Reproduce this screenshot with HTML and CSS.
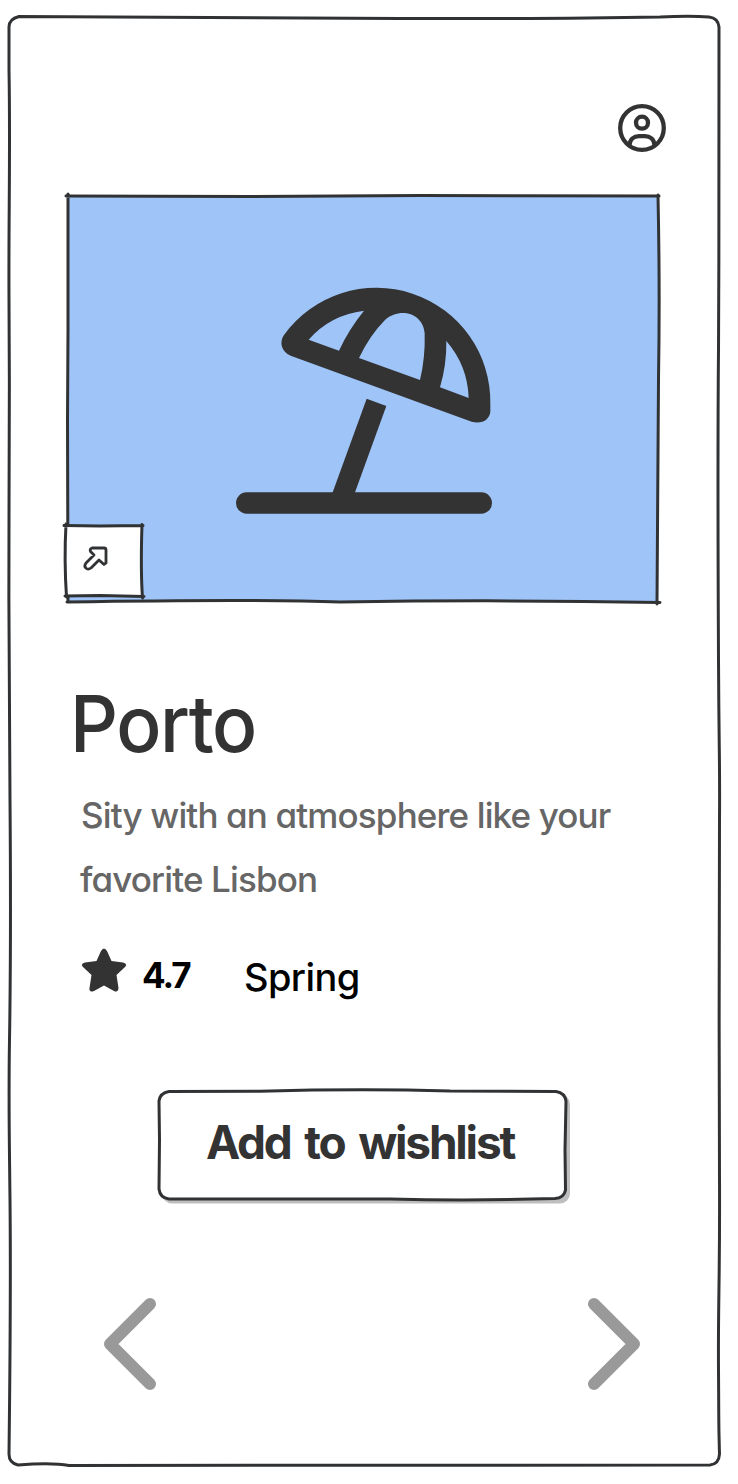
FILE: index.html
```html
<!DOCTYPE html>
<html lang="en">
<head>
<meta charset="utf-8">
<title>Porto</title>
<link rel="stylesheet" href="styles.css">
</head>
<body>
<main class="card">
  <svg class="outline" viewBox="0 0 738 1484" aria-hidden="true">
    <path d="M19 16.500Q250 18 400 18.500T660 17Q690 15.500 709 17Q718 18 719 27C718 120 719.500 240 718.500 350S718 560 718.500 660S720 760 719.500 820S719 1080 719.500 1180S718 1300 718.500 1370S718.500 1420 719.500 1454Q719 1464 710 1465L69 1465.500Q52 1462.500 18 1465Q9 1463 9 1454C10 1370 11 1290 10 1200S8.500 1100 9.500 1040S10.500 860 10 800S8.500 620 9 520S9.500 380 9 300S10.500 150 9 70V27Q9 19 19 16.500Z"/>
  </svg>
  <header class="topbar">
    <svg class="profile" viewBox="618 104 48 48" role="img" aria-label="Profile">
      <circle cx="642" cy="128" r="21.800"/><circle cx="642" cy="122.700" r="6"/>
      <path d="M629.500 145C630 139 634 136.200 639 136.200H645C650 136.200 654 139 654.500 145"/>
    </svg>
  </header>
  <section class="hero">
    <svg class="hero-art" viewBox="64 191 600 416" role="img" aria-label="Beach umbrella">
      <path class="sky" d="M68 196L420 195L658 196L659 350L657 602Q500 599 340 602Q200 599 68 602Z"/>
      <path class="line" d="M66 196L250 196.500L420 195.500L659 196M658 195Q660 290 658.500 380L657 604M660 602.500Q500 599.500 340 602Q260 599 67 602M68 194V330L67.500 420L68 602"/>
      <g class="umbrella" transform="translate(220 270) scale(.33333)">
        <path fill-rule="evenodd" d="M192 195A342 342 0 0 1 811 402V425C808 450 785 463 755 455L212 257C184 245 177 217 192 195ZM266 209L357 242Q385 180 432 122Q330 135 266 209ZM417 264L600 330Q616 265 614 190C610 130 540 110 495 150Q450 195 417 264ZM679 213Q680 285 660 352L746 384Q743 287 679 213Z"/>
        <path d="M440 386L499 408L404 670H337Z"/>
        <rect x="48" y="667" width="768" height="64" rx="32"/>
      </g>
    </svg>
    <svg class="open" viewBox="62 521 84 80" role="img" aria-label="Open">
      <path class="paper" d="M66 526H142V596H66Z"/>
      <path class="line" d="M64 525.500L100 526L143 525.500M142 524.500Q140.500 570 142.500 598M144 596.500L100 595.500L65 596M66 524Q64 560 66.500 597"/>
      <path class="arrow" d="M92 548H104Q106 548 106 550V563L104 564.500L99 560L91 568C87 571 83 567 86 563L94 555L90.500 551.500Q89.500 549 92 548Z"/>
    </svg>
  </section>
  <section class="details">
    <h1 class="title"><span class="fit name">Porto</span></h1>
    <p class="summary"><span class="fit first">Sity with an atmosphere like your</span><br><span class="fit second">favorite Lisbon</span></p>
    <div class="facts">
      <svg class="star" viewBox="81 948 46 45" aria-hidden="true"><path d="M101 951Q104 946 107 951L111.500 961L123 962.500Q128 964 125 967L116.500 975L118.500 988Q118 993 114 991L104 985.500L94 991Q89 993 89.500 988L91.500 975L83 967Q80 964 85 962.500L96.500 961Z"/></svg>
      <span class="rating">4.7</span>
      <span class="season">Spring</span>
    </div>
  </section>
  <button class="wishlist" type="button">
    <svg class="button-frame" viewBox="156 1086 418 120" aria-hidden="true">
      <rect class="shadow" x="162" y="1094" width="408" height="109.500" rx="10"/>
      <path class="paper line" d="M169 1091.500L260 1091.300Q360 1088.500 450 1091L556 1091.500Q565 1093 566 1101L565 1150L565.500 1190Q564 1198 555 1198.500Q470 1201 390 1199L169 1199Q160 1198 159 1189L159.500 1140L159 1101Q160 1093 169 1091.500Z"/>
    </svg>
    <span class="button-label">Add to wishlist</span>
  </button>
  <nav class="pager">
    <svg class="chevron" viewBox="0 0 54 94" role="img" aria-label="Previous"><path d="M47 7L7 47L47 87"/></svg>
    <svg class="chevron" viewBox="0 0 54 94" role="img" aria-label="Next"><path d="M7 7L47 47L7 87"/></svg>
  </nav>
</main>
</body>
</html>
```
FILE: styles.css
```css
* { box-sizing: border-box; }
body { margin: 0; background: #fff; font-family: Inter, "Open Sans", sans-serif; font-feature-settings: "cv11" 1; color: #333; }
svg { display: block; fill: none; }
.card { position: relative; width: 738px; height: 1484px; padding: 104px 72px 0 64px; overflow: hidden; display: flex; flex-direction: column; }
.outline { position: absolute; inset: 0; width: 738px; height: 1484px; stroke: #303234; stroke-width: 3; pointer-events: none; }
.topbar { display: flex; justify-content: flex-end; height: 87px; }
.profile { width: 48px; height: 48px; stroke: #333; stroke-width: 4.3; }
.hero { position: relative; height: 416px; }
.hero-art { width: 600px; height: 416px; }
.sky { fill: #9fc4f8; }
.line { stroke: #303234; stroke-width: 3; stroke-linecap: round; stroke-linejoin: round; }
.umbrella { fill: #333; }
.paper { fill: #fff; }
.open { position: absolute; left: -2px; bottom: 6px; width: 84px; height: 80px; }
.arrow { stroke: #303234; stroke-width: 2.8; stroke-linejoin: round; }
.details { padding-top: 77px; }
.fit { display: inline-block; transform-origin: left center; white-space: nowrap; }
.title { margin: 0; padding-left: 6px; height: 99px; font-size: 78px; font-weight: 550; line-height: 80px; letter-spacing: -1.5px; }
.name { transform: scaleX(.96); }
.summary { margin: 0; padding-left: 16px; color: #666; font-size: 35px; font-weight: 500; line-height: 64px; height: 128px; }
.first { margin-left: 1px; letter-spacing: -.86px; }
.second { letter-spacing: -.86px; }
.facts { display: flex; align-items: center; padding: 37px 0 0 17px; height: 81px; color: #000; }
.star { width: 46px; height: 45px; fill: #333; }
.rating { width: 102px; margin-left: 15px; padding-top: 9px; font-size: 35px; font-weight: 750; letter-spacing: -2px; }
.season { padding-top: 14px; font-size: 38px; font-weight: 500; letter-spacing: -.6px; }
.wishlist { position: relative; align-self: flex-start; margin: 94px 0 0 92px; width: 418px; height: 120px; padding: 0 10px 8px 0; border: 0; background: none; color: #333; font: inherit; font-size: 46px; font-weight: 750; letter-spacing: -2.2px; word-spacing: 5px; }
.button-frame { position: absolute; inset: 0; width: 418px; height: 120px; }
.shadow { fill: #bebebe; }
.button-label { position: relative; display: inline-block; white-space: nowrap; }
.pager { display: flex; justify-content: space-between; padding: 91px 25px 0 39px; }
.chevron { width: 54px; height: 94px; stroke: #999; stroke-width: 12; stroke-linecap: round; stroke-linejoin: round; }
```
